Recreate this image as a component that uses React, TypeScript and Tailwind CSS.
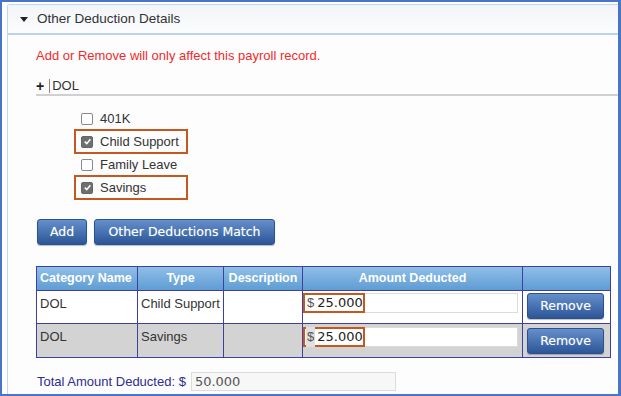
import React from 'react';

type Opcion = { label: string; checked: boolean };

const opciones: Opcion[] = [
  { label: '401K', checked: false },
  { label: 'Child Support', checked: true },
  { label: 'Family Leave', checked: false },
  { label: 'Savings', checked: true },
];

const filas = [
  { cat: 'DOL', tipo: 'Child Support', monto: '25.000', gris: false },
  { cat: 'DOL', tipo: 'Savings', monto: '25.000', gris: true },
];

const btn =
  "rounded-[3px] border border-[#2b5290] bg-gradient-to-b from-[#6590cb] to-[#2c5697] text-white text-[12.5px] font-['DejaVu_Sans',sans-serif] [text-shadow:0_0_1px_rgba(255,255,255,0.4)] shadow-[0_1px_1px_rgba(0,0,0,0.25)]";

const Checkbox = ({ checked }: { checked: boolean }) => (
  <span
    className={`flex h-[12px] w-[12px] items-center justify-center rounded-[2px] border ${
      checked ? 'border-[#666] bg-[#6f6f6f]' : 'border-[#8a8a8a] bg-white'
    }`}
  >
    {checked && (
      <svg width="9" height="9" viewBox="0 0 10 10">
        <path d="M2 5.2 L4.2 7.4 L8.2 2.6" stroke="white" strokeWidth="1.8" fill="none" />
      </svg>
    )}
  </span>
);

export default function App() {
  return (
    <div className="h-[396px] w-[621px] overflow-hidden border-2 border-r-[3px] border-[#4a75c6] bg-white font-['Liberation_Sans',Arial,sans-serif] text-[13px] text-[#333]">
      <div className="ml-[5px] mt-[2px] h-[390px] rounded-tl-[3px] border-l border-t border-[#c4d6ec] bg-[#fdfdfe]">
        {/* cabecera */}
        <div className="flex h-[30px] items-center border-b-2 border-[#bcd3ee] bg-gradient-to-b from-[#f2f5f8] to-[#fbfcfd]">
          <span className="ml-[12px] h-0 w-0 border-x-[4px] border-t-[5px] border-x-transparent border-t-[#222]" />
          <span className="ml-[9px] text-[13.5px] text-[#333]">Other Deduction Details</span>
        </div>

        <div className="pl-[28px]">
          <div className="mt-[11px] flex h-[20px] items-center text-[13px] text-[#f32a2a]">
            Add or Remove will only affect this payroll record.
          </div>

          <div className="mt-[12px] flex h-[18px] items-center border-b-2 border-[#d0d0d0] pb-px">
            <span className="text-[14px] font-bold leading-none text-[#222]">+</span>
            <span className="ml-[5px] h-[14px] w-px bg-[#888]" />
            <span className="ml-[2px]">DOL</span>
          </div>

          <div className="mt-[11px] flex flex-col pl-[40px]">
            {opciones.map((o) => (
              <div key={o.label} className="flex h-[23px] items-center">
                <div
                  className={`flex h-[21px] w-[110px] items-center pl-[5px] ${
                    o.checked ? 'ring-2 ring-[#c4581f]' : ''
                  }`}
                >
                  <Checkbox checked={o.checked} />
                  <span className="ml-[7px]">{o.label}</span>
                </div>
              </div>
            ))}
          </div>

          <div className="mt-[20px] flex gap-[7px] pl-px">
            <button className={`${btn} h-[26px] w-[50px]`}>Add</button>
            <button className={`${btn} h-[26px] w-[181px]`}>Other Deductions Match</button>
          </div>

          <table className="mt-[21px] w-[574px] table-fixed border-collapse border border-[#3f3fa0]">
            <colgroup>
              <col className="w-[101px]" />
              <col className="w-[86px]" />
              <col className="w-[79px]" />
              <col className="w-[220px]" />
              <col className="w-[88px]" />
            </colgroup>
            <thead>
              <tr className="h-[24px] whitespace-nowrap bg-gradient-to-b from-[#8fbfe8] to-[#5d9bd2] text-[12.5px] font-bold text-white">
                <th className="border border-[#3f3fa0] pl-[3px] text-left">Category Name</th>
                <th className="border border-[#3f3fa0]">Type</th>
                <th className="border border-[#3f3fa0] px-px">Description</th>
                <th className="border border-[#3f3fa0]">Amount Deducted</th>
                <th className="border border-[#3f3fa0]"></th>
              </tr>
            </thead>
            <tbody>
              {filas.map((f, i) => (
                <tr key={i} className={`${i === 0 ? 'h-[33px]' : 'h-[34px]'} ${f.gris ? 'bg-[#d3d3d3]' : 'bg-white'}`}>
                  <td className="border border-[#3f3fa0] px-[3px] pt-[3px] align-top">{f.cat}</td>
                  <td className="border border-[#3f3fa0] px-[3px] pt-[3px] align-top">{f.tipo}</td>
                  <td className="border border-[#3f3fa0]"></td>
                  <td className="border border-[#3f3fa0] p-0 align-top">
                    <div className={`${i === 0 ? 'mt-[2px]' : 'mt-[3px]'} flex h-[20px] w-[215px] items-center border border-[#dcdcdc] bg-white`}>
                      <div className="ml-[-1px] flex h-[20px] w-[62px] items-center border-2 border-[#c4581f] pl-[1px]">
                        <span className={`${f.gris ? 'bg-[#e0e0e0]' : ''} px-px text-[#555]`}>$</span>
                        <span className="ml-[2px] font-['DejaVu_Sans',sans-serif] text-[13px] text-[#222]">{f.monto}</span>
                      </div>
                    </div>
                  </td>
                  <td className="border border-[#3f3fa0] p-0 align-top">
                    <button className={`${btn} ${i === 0 ? 'mt-[2px]' : 'mt-[4px]'} ml-[4px] h-[26px] w-[77px]`}>Remove</button>
                  </td>
                </tr>
              ))}
            </tbody>
          </table>

          <div className="mt-[14px] flex h-[19px] items-center pl-px">
            <span className="text-[13px] text-[#2d2d8e]">Total Amount Deducted: $</span>
            <div className="ml-[5px] flex h-[19px] w-[205px] items-center border border-[#dcdcdc] bg-[#f7f7f7] pl-[3px] font-['DejaVu_Sans',sans-serif] text-[13px] text-[#555]">
              50.000
            </div>
          </div>
        </div>
      </div>
    </div>
  );
}
